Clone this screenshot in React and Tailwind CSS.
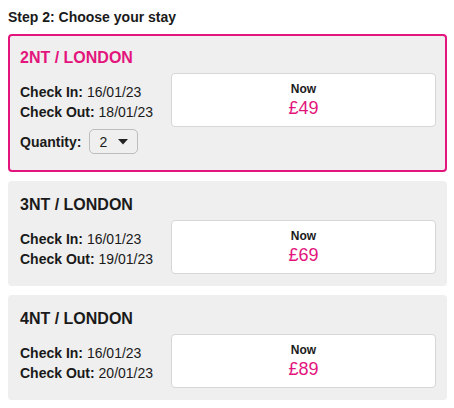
import React from "react";

const PINK = "text-[#e3157d]";

function PriceBox({ price }) {
  return (
    <div className="flex-1 h-[54px] bg-white border border-[#d6d6d6] rounded-[4px] flex flex-col items-center justify-center">
      <div className="text-[12px] leading-[16px] font-bold text-[#1a1a1a]">Now</div>
      <div className={`text-[18px] leading-[22px] ${PINK}`}>{price}</div>
    </div>
  );
}

function Card({ title, checkIn, checkOut, price, active }) {
  return (
    <div
      className={`rounded-[4px] border-2 pt-[11px] pb-[10px] pl-[10px] pr-[9px] bg-[#efefef] ${
        active ? "border-[#e3157d]" : "border-transparent"
      }`}
    >
      <div
        className={`text-[16px] leading-[21px] font-bold ${
          active ? PINK : "text-[#1a1a1a]"
        }`}
      >
        {title}
      </div>
      <div className="flex items-start mt-[5px]">
        <div className="w-[151px] shrink-0 text-[14px] leading-[20px] text-[#1a1a1a] pt-[9px]">
          <div>
            <span className="font-bold">Check In:</span> {checkIn}
          </div>
          <div>
            <span className="font-bold">Check Out:</span> {checkOut}
          </div>
          {active && (
            <div className="flex items-center mt-[7px] mb-[6px]">
              <span className="font-bold mr-[8px]">Quantity:</span>
              <div className="w-[49px] h-[25px] border border-[#bdbdbd] rounded-[5px] bg-[#efefef] flex items-center justify-between pl-[9px] pr-[9px]">
                <span>2</span>
                <svg width="10" height="6" viewBox="0 0 10 6">
                  <path d="M0 0 L10 0 L5 5.5 Z" fill="#222" />
                </svg>
              </div>
            </div>
          )}
        </div>
        <PriceBox price={price} />
      </div>
    </div>
  );
}

export default function App() {
  return (
    <div
      className="w-[454px] h-[408px] bg-white px-2 pt-[7px] overflow-hidden"
      style={{ fontFamily: '"Liberation Sans", Arial, sans-serif' }}
    >
      <div className="text-[14px] leading-[20px] font-bold text-[#1a1a1a] mb-[7px]">
        Step 2: Choose your stay
      </div>
      <div className="flex flex-col gap-[9px] mr-[-1px]">
        <Card title="2NT / LONDON" checkIn="16/01/23" checkOut="18/01/23" price="£49" active />
        <Card title="3NT / LONDON" checkIn="16/01/23" checkOut="19/01/23" price="£69" />
        <Card title="4NT / LONDON" checkIn="16/01/23" checkOut="20/01/23" price="£89" />
      </div>
    </div>
  );
}
